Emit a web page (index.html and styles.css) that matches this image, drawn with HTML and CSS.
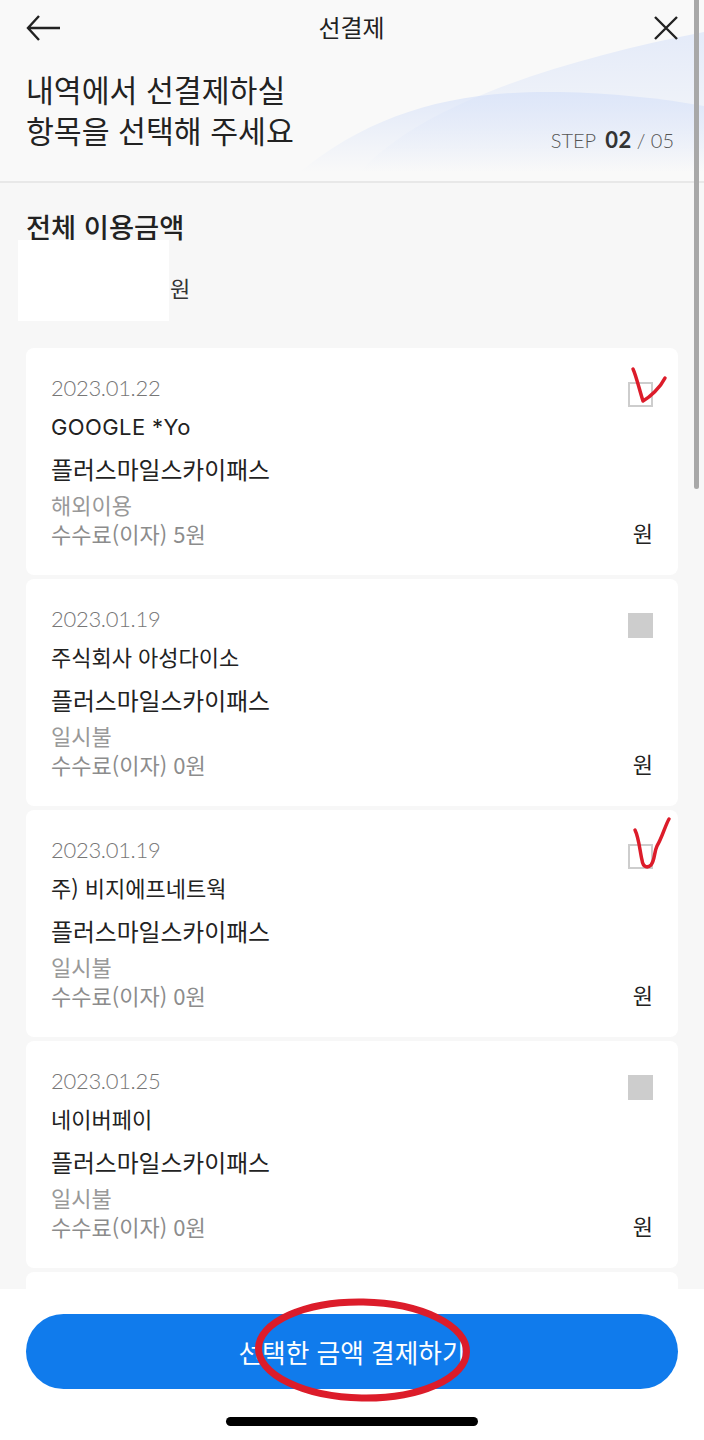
FILE: index.html
```html
<!DOCTYPE html>
<html lang="ko">
<head>
  <meta charset="UTF-8">
  <title>선결제</title>
  <link rel="stylesheet" href="styles.css">
</head>
<body>
  <div class="screen">
    <div class="header">
      <svg class="header-wave" width="704" height="181" viewBox="0 0 704 181">
        <defs>
          <linearGradient id="waveFade" x1="0" y1="0" x2="0" y2="1">
            <stop offset="0" stop-color="#d6e1f9" stop-opacity="0.6"/>
            <stop offset="1" stop-color="#d6e1f9" stop-opacity="0"/>
          </linearGradient>
          <linearGradient id="waveBand" x1="0" y1="0" x2="0" y2="1">
            <stop offset="0" stop-color="#d6e1f9" stop-opacity="0.7"/>
            <stop offset="1" stop-color="#d6e1f9" stop-opacity="0"/>
          </linearGradient>
        </defs>
        <path d="M360 172 C420 105 560 60 704 32 V172 Z" fill="url(#waveFade)"/>
        <path d="M300 172 C370 115 450 90 560 92 C610 93 660 98 704 106 V172 Z" fill="url(#waveBand)"/>
      </svg>
      <div class="top-bar">
        <svg class="icon" width="36" height="28" viewBox="0 0 36 28">
          <path d="M34 14 H2 M13 2 L2 14 L13 26" fill="none" stroke="#222" stroke-width="2.4"/>
        </svg>
        <div class="page-title">선결제</div>
        <svg class="icon icon-close" width="26" height="26" viewBox="0 0 26 26">
          <path d="M2 2 L24 24 M24 2 L2 24" fill="none" stroke="#222" stroke-width="2.4"/>
        </svg>
      </div>
      <div class="intro">
        <h1 class="intro-text">내역에서 선결제하실<br>항목을 선택해 주세요</h1>
        <div class="step"><span>STEP</span><strong>02</strong><span>/ 05</span></div>
      </div>
    </div>

    <div class="content">
      <div class="summary">
        <div class="summary-title">전체 이용금액</div>
        <div class="summary-amount"><span class="masked"></span><span class="summary-won">원</span></div>
      </div>

      <div class="card-list">
        <div class="card">
          <div class="card-top">
            <div class="card-date">2023.01.22</div>
            <span class="check"></span>
          </div>
          <div class="card-shop latin">GOOGLE *Yo</div>
          <div class="card-name">플러스마일스카이패스</div>
          <div class="card-type">해외이용</div>
          <div class="card-bottom">
            <span class="card-fee">수수료(이자) 5원</span>
            <span class="card-won">원</span>
          </div>
        </div>
        <div class="card">
          <div class="card-top">
            <div class="card-date">2023.01.19</div>
            <span class="check filled"></span>
          </div>
          <div class="card-shop">주식회사 아성다이소</div>
          <div class="card-name">플러스마일스카이패스</div>
          <div class="card-type">일시불</div>
          <div class="card-bottom">
            <span class="card-fee">수수료(이자) 0원</span>
            <span class="card-won">원</span>
          </div>
        </div>
        <div class="card">
          <div class="card-top">
            <div class="card-date">2023.01.19</div>
            <span class="check"></span>
          </div>
          <div class="card-shop">주) 비지에프네트웍</div>
          <div class="card-name">플러스마일스카이패스</div>
          <div class="card-type">일시불</div>
          <div class="card-bottom">
            <span class="card-fee">수수료(이자) 0원</span>
            <span class="card-won">원</span>
          </div>
        </div>
        <div class="card">
          <div class="card-top">
            <div class="card-date">2023.01.25</div>
            <span class="check filled"></span>
          </div>
          <div class="card-shop">네이버페이</div>
          <div class="card-name">플러스마일스카이패스</div>
          <div class="card-type">일시불</div>
          <div class="card-bottom">
            <span class="card-fee">수수료(이자) 0원</span>
            <span class="card-won">원</span>
          </div>
        </div>
        <div class="card"></div>
      </div>
    </div>

    <div class="footer">
      <button class="pay-button">선택한 금액 결제하기</button>
      <div class="home-bar"></div>
    </div>

    <div class="scrollbar"></div>

    <!-- red pen marks on top of the screenshot -->
    <svg class="marks" width="704" height="1440" viewBox="0 0 704 1440">
      <path d="M633 369 C636 375 640 392 643 401 C650 397 660 388 665 378" fill="none" stroke="#dc1c2a" stroke-width="3.5" stroke-linecap="round" stroke-linejoin="round"/>
      <path d="M635 830 C639 838 640 852 642 860 C643 868 648 868 651 865 C655 860 654 852 657 846 C662 838 665 826 669 819" fill="none" stroke="#dc1c2a" stroke-width="3.5" stroke-linecap="round" stroke-linejoin="round"/>
      <ellipse cx="362.5" cy="1350" rx="104" ry="48" fill="none" stroke="#dc1c2a" stroke-width="7" transform="rotate(1 362 1350)"/>
    </svg>
  </div>
</body>
</html>
```

FILE: styles.css
```css
* {
  box-sizing: border-box;
}
body {
  margin: 0;
  font-family: "Noto Sans CJK KR", "Noto Sans", sans-serif;
  color: #222;
}
.screen {
  position: relative;
  width: 704px;
  height: 1440px;
  display: flex;
  flex-direction: column;
  overflow: hidden;
  background: #f7f7f7;
}
/* Header */
.header {
  position: relative;
  height: 183px;
  flex-shrink: 0;
  padding: 0 25px 0 26px;
  background: #f9f9f9;
  border-bottom: 2px solid #e8e8e8;
}
.header-wave {
  position: absolute;
  top: 0;
  left: 0;
}
.top-bar {
  position: relative;
  display: grid;
  grid-template-columns: 1fr auto 1fr;
  align-items: center;
  height: 56px;
}
.icon {
  display: block;
}
.icon-close {
  justify-self: end;
}
.page-title {
  font-size: 24px;
  font-weight: 400;
  margin-top: -3px;
  margin-right: 2px;
}
.intro {
  position: relative;
  display: flex;
  align-items: flex-end;
  justify-content: space-between;
  margin-top: 13px;
}
.intro-text {
  margin: 0;
  font-size: 30.3px;
  font-weight: 400;
  line-height: 41px;
}
.step {
  display: flex;
  align-items: baseline;
  font-family: "Lato", sans-serif;
  font-size: 20px;
  font-weight: 300;
  color: #555;
  margin-right: 5px;
  margin-bottom: -2px;
}
.step strong {
  color: #333;
  margin: 0 5px 0 9px;
  font-weight: 700;
  font-size: 22px;
  letter-spacing: 0.5px;
}
/* Content */
.content {
  flex: 1;
  min-height: 0;
  overflow: hidden;
  padding: 0 26px;
}
.summary {
  height: 165px;
}
.summary-title {
  padding-top: 22px;
  font-size: 27.3px;
  font-weight: 500;
  line-height: 42px;
}
.summary-amount {
  display: flex;
  align-items: center;
  gap: 1px;
  margin: -7px 0 0 -8px;
  font-size: 22px;
  color: #333;
}
.masked {
  width: 151px;
  height: 81px;
  background: #fff;
}
.summary-won {
  padding-top: 12px;
}
.card-list {
  display: flex;
  flex-direction: column;
  gap: 4px;
}
.card {
  height: 227px;
  flex-shrink: 0;
  padding: 24px 25px 0 25px;
  background: #fff;
  border-radius: 8px;
}
.card-top {
  display: flex;
  justify-content: space-between;
  align-items: flex-start;
  height: 32px;
}
.card-date {
  font-family: "Lato", "Noto Sans", sans-serif;
  font-size: 22px;
  font-weight: 300;
  letter-spacing: -0.3px;
  line-height: 32px;
  color: #777;
}
.check {
  width: 25px;
  height: 25px;
  margin-top: 10px;
  border: 2px solid #cdcdcd;
}
.check.filled {
  background: #cdcdcd;
}
.card-shop {
  margin-top: 5px;
  font-size: 22px;
  line-height: 32px;
}
.card-shop.latin {
  margin-top: 7px;
  margin-bottom: -2px;
  font-family: "Inter", "Noto Sans CJK KR", sans-serif;
  letter-spacing: 0.4px;
}
.card-name {
  margin-top: 11px;
  font-size: 23.8px;
  line-height: 33px;
}
.card-type {
  margin-top: 4px;
  font-size: 22px;
  line-height: 30px;
  color: #999;
}
.card-bottom {
  display: flex;
  justify-content: space-between;
  align-items: center;
  margin-top: -1px;
  font-size: 22px;
  line-height: 30px;
}
.card-fee {
  color: #8c8c8c;
}
.card-won {
  color: #222;
  margin-top: -3px;
}
/* Footer */
.footer {
  flex-shrink: 0;
  height: 151px;
  padding: 25px 26px 0;
  background: #fff;
}
.pay-button {
  display: block;
  width: 100%;
  height: 75px;
  border: none;
  border-radius: 38px;
  background: #107bec;
  color: #fff;
  font-family: inherit;
  font-size: 25.7px;
}
.home-bar {
  width: 252px;
  height: 9px;
  margin: 28px auto 0;
  background: #000;
  border-radius: 5px;
}
.scrollbar {
  position: absolute;
  top: 0;
  left: 694px;
  width: 5px;
  height: 489px;
  background: #a8a8a8;
  border-radius: 0 0 3px 3px;
}
.marks {
  position: absolute;
  top: 0;
  left: 0;
}
```
